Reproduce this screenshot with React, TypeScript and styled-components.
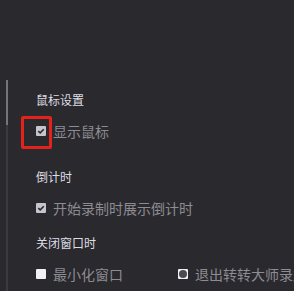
import React, {FC} from "react";
import styled, {createGlobalStyle} from "styled-components";

const GlobalStyle = createGlobalStyle`
  html, body {
    margin: 0;
    padding: 0;
    background: #2a292e;
    overflow: hidden;
  }
  body {
    font-family: "Noto Sans CJK SC", "Noto Sans", sans-serif;
  }
`;

const Page = styled.div`
  display: flex;
  width: 294px;
  height: 291px;
  background: #2a292e;
  overflow: hidden;
`;

const ScrollTrack = styled.div`
  margin: 80px 0 0 6px;
  width: 2px;
  background: #3b3a40;
  flex-shrink: 0;
`;

const ScrollThumb = styled.div`
  height: 45px;
  background: #75747b;
`;

const Content = styled.div`
  padding: 92px 0 0 28px;
  display: flex;
  flex-direction: column;
  white-space: nowrap;
`;

const Section = styled.div<{ $after: number }>`
  display: flex;
  flex-direction: column;
  gap: 15px;
  margin-bottom: ${(p) => p.$after}px;
`;

const Title = styled.div`
  font-size: 12px;
  line-height: 16px;
  height: 16px;
  color: #dedde2;
`;

const Row = styled.div`
  display: flex;
  align-items: center;
  height: 16px;
`;

const Option = styled.label<{ $width?: number }>`
  position: relative;
  display: flex;
  align-items: center;
  gap: 7px;
  width: ${(p) => (p.$width ? `${p.$width}px` : "auto")};
  font-size: 14px;
  line-height: 16px;
  color: #8d8c93;
`;

const Box = styled.span<{ $checked?: boolean }>`
  display: flex;
  align-items: center;
  justify-content: center;
  width: 10px;
  height: 10px;
  border-radius: 1px;
  background: ${(p) => (p.$checked ? "#c6c5cd" : "#f1f1f3")};
  flex-shrink: 0;
`;

const RadioDot = styled.span`
  width: 8px;
  height: 8px;
  border-radius: 50%;
  background: #4b4a53;
`;

const Highlight = styled.span`
  position: absolute;
  left: -15px;
  top: -7px;
  width: 31px;
  height: 33px;
  box-sizing: border-box;
  border: 3px solid #e3221b;
  border-radius: 2px;
`;

const Check: FC = () => (
    <svg width="8" height="8" viewBox="0 0 8 8">
        <path d="M1.3 4.1 L3.2 5.8 L6.8 2.2" fill="none" stroke="#2c2b31" strokeWidth="1.6"/>
    </svg>
);

const App: FC = () => {
    return (
        <Page>
            <GlobalStyle/>
            <ScrollTrack>
                <ScrollThumb/>
            </ScrollTrack>
            <Content>
                <Section $after={30}>
                    <Title>鼠标设置</Title>
                    <Row>
                        <Option>
                            <Highlight/>
                            <Box $checked><Check/></Box>
                            显示鼠标
                        </Option>
                    </Row>
                </Section>
                <Section $after={19}>
                    <Title>倒计时</Title>
                    <Row>
                        <Option>
                            <Box $checked><Check/></Box>
                            开始录制时展示倒计时
                        </Option>
                    </Row>
                </Section>
                <Section $after={0}>
                    <Title>关闭窗口时</Title>
                    <Row>
                        <Option $width={142}>
                            <Box/>
                            最小化窗口
                        </Option>
                        <Option>
                            <Box><RadioDot/></Box>
                            退出转转大师录屏
                        </Option>
                    </Row>
                </Section>
            </Content>
        </Page>
    );
};

export default App;
